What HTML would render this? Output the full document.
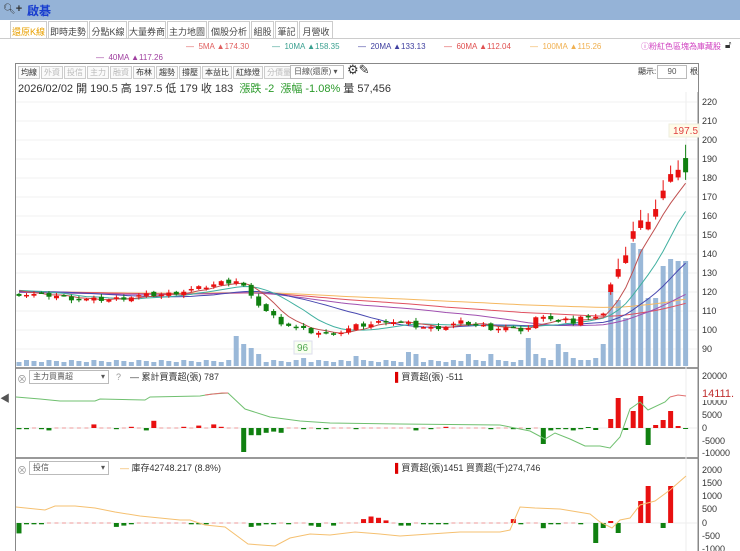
<!DOCTYPE html>
<html><head><meta charset="utf-8">
<style>
*{margin:0;padding:0;box-sizing:border-box}
body{width:740px;height:551px;overflow:hidden;background:#fff;font-family:"Liberation Sans","Noto Sans CJK TC",sans-serif;font-size:11px;color:#333;position:relative}
.abs{position:absolute;white-space:nowrap}
#title{left:0;top:0;width:740px;height:20px;background:#95b3d7}
.tab{position:absolute;top:21px;height:18px;border:1px solid #ccc;border-bottom:none;background:#fff;font-size:9px;color:#444;padding:3px 0 0;text-align:center;white-space:nowrap;overflow:hidden}
.tb{display:inline-block;border:1px solid #ccc;height:13px;font-size:8px;padding:0 2px;margin-right:1px;line-height:12px;color:#333;background:#fafafa}
.tb.g{color:#bbb}
.sel{position:absolute;border:1px solid #bbb;background:#fff;font-size:8px;height:14px;line-height:12px;padding:0 3px;color:#555;overflow:hidden}
</style></head><body>
<div id="title" class="abs"></div>
<div class="abs" style="left:3px;top:3px;font-size:10px;color:#333">🔍︎<b style="font-size:11px">+</b></div>
<div class="abs" style="left:27px;top:2px;font-size:12px;font-weight:bold;color:#1a3fcf">啟碁</div>
<div class="tab" style="left:10px;width:37px;color:#e8a000">還原K線</div>
<div class="tab" style="left:48px;width:40px">即時走勢</div>
<div class="tab" style="left:89px;width:38px">分點K線</div>
<div class="tab" style="left:128px;width:38px">大量券商</div>
<div class="tab" style="left:167px;width:40px">主力地圖</div>
<div class="tab" style="left:208px;width:42px">個股分析</div>
<div class="tab" style="left:251px;width:23px">組股</div>
<div class="tab" style="left:275px;width:23px">筆記</div>
<div class="tab" style="left:299px;width:34px">月營收</div>
<div class="abs" style="left:0;top:38px;width:740px;border-top:1px solid #ccc"></div>
<div class="abs" style="left:186px;top:42px;font-size:8px;color:#e06060">— &nbsp;5MA ▲174.30</div>
<div class="abs" style="left:272px;top:42px;font-size:8px;color:#3aa090">— &nbsp;10MA ▲158.35</div>
<div class="abs" style="left:358px;top:42px;font-size:8px;color:#4040a0">— &nbsp;20MA ▲133.13</div>
<div class="abs" style="left:444px;top:42px;font-size:8px;color:#e05050">— &nbsp;60MA ▲112.04</div>
<div class="abs" style="left:530px;top:42px;font-size:8px;color:#f0b050">— &nbsp;100MA ▲115.26</div>
<div class="abs" style="left:641px;top:41px;font-size:8px;color:#d040c0">ⓘ粉紅色區塊為庫藏股</div>
<div class="abs" style="left:725px;top:40px;font-size:10px">🔓︎</div>
<div class="abs" style="left:96px;top:53px;font-size:8px;color:#a040a0">— &nbsp;40MA ▲117.26</div>
<div class="abs" style="left:15px;top:63px;width:684px;height:488px;border:1px solid #888;border-bottom:none"></div>
<div class="abs" style="left:18px;top:66px">
<span class="tb">均線</span><span class="tb g">外資</span><span class="tb g">投信</span><span class="tb g">主力</span><span class="tb g">融資</span><span class="tb">布林</span><span class="tb">趨勢</span><span class="tb">撐壓</span><span class="tb">本益比</span><span class="tb">紅綠燈</span><span class="tb g">分價量</span>
</div>
<div class="sel" style="left:290px;top:65px;width:54px">日線(還原) ▾</div>
<div class="abs" style="left:347px;top:62px;font-size:13px">⚙︎✎</div>
<div class="abs" style="left:638px;top:66px;font-size:8px">顯示:</div>
<div class="sel" style="left:657px;top:65px;width:30px;text-align:center">90</div>
<div class="abs" style="left:690px;top:66px;font-size:8px">根</div>
<div class="abs" style="left:18px;top:80px;font-size:11px;color:#333">2026/02/02 開 190.5 高 197.5 低 179 收 183 <span style="color:#2a9a2a">&nbsp;漲跌 -2 &nbsp;漲幅 -1.08%</span> 量 57,456</div>
<div class="abs" style="left:0;top:390px;font-size:10px;color:#555">◀</div>
<div class="abs" style="left:16px;top:367px;width:683px;border-top:2px solid #999"></div>
<div class="abs" style="left:16px;top:457px;width:683px;border-top:2px solid #999"></div>
<div class="abs" style="left:17px;top:371px;color:#999;font-size:10px">⊗</div>
<div class="sel" style="left:29px;top:370px;width:80px">主力買賣超 <span style="float:right">▾</span></div>
<div class="abs" style="left:116px;top:372px;font-size:9px;color:#999">?</div>
<div class="abs" style="left:130px;top:370px;font-size:9px;color:#333">— 累計買賣超(張) 787</div>
<div class="abs" style="left:395px;top:370px;font-size:9px;color:#333"><span style="color:#d00">▌</span>買賣超(張) -511</div>
<div class="abs" style="left:17px;top:462px;color:#999;font-size:10px">⊗</div>
<div class="sel" style="left:29px;top:461px;width:80px">投信 <span style="float:right">▾</span></div>
<div class="abs" style="left:120px;top:461px;font-size:9px;color:#333"><span style="color:#f0b050">—</span> 庫存42748.217 (8.8%)</div>
<div class="abs" style="left:395px;top:461px;font-size:9px;color:#333"><span style="color:#d00">▌</span>買賣超(張)1451 買賣超(千)274,746</div>
<svg id="s" class="abs" style="left:0;top:0" width="740" height="551"></svg>
<script>
var S=document.getElementById('s'),h='';
function L(x1,y1,x2,y2,c,w){h+='<line x1="'+x1+'" y1="'+y1+'" x2="'+x2+'" y2="'+y2+'" stroke="'+c+'" stroke-width="'+(w||1)+'"/>';}
function R(x,y,w,hh,c){if(hh<0){y+=hh;hh=-hh;}h+='<rect x="'+x+'" y="'+y+'" width="'+w+'" height="'+Math.max(hh,1)+'" fill="'+c+'"/>';}
function T(x,y,t,c,s){h+='<text x="'+x+'" y="'+y+'" font-size="'+(s||9)+'" fill="'+(c||'#333')+'" font-family="Liberation Sans">'+t+'</text>';}
function P(pts,c){h+='<polyline fill="none" stroke="'+c+'" stroke-width="1" points="'+pts.join(' ')+'"/>';}
L(698,92,698,551,'#888');
var py=function(p){return 102+(220-p)*1.9;};
for(var p=90;p<=220;p+=10){L(16,py(p),697,py(p),'#f2f2f2');T(702,py(p)+3,p);}
L(686,92,686,551,'#eee');
var K={0:119,5:118,8:116,12:116,16:118,20:119,24:122,27:125,29:126,30:123,31:117,33:110,35:104,37:101,39:99,41:98,43:99,45:102,47:103,49:105,51:104,53:102,55:101,57:102,59:104,61:103,63:101,65:101,67:100,68:101,69:106,70:108,71:106,72:104,73:105,74:104,75:107,76:106,77:108,78:109,79:125,80:131,81:140,82:152,83:157,84:158,85:164,86:173,87:181,88:185,89:183};
var ks=Object.keys(K).map(Number),C=[];
for(var i=0;i<90;i++){for(var j=0;j<ks.length-1;j++)if(i>=ks[j]&&i<=ks[j+1]){var a=ks[j],b=ks[j+1];C[i]=K[a]+(K[b]-K[a])*(i-a)/(b-a)+((i*37)%7-3)*0.35;break;}}
C[79]=124;C[89]=183;
var X=function(i){return 19+i*7.49;};
var full=[];for(i=0;i<100;i++)full.push(120+Math.sin(i/7)*1.5);full=full.concat(C);
function ma(n){var out=[];for(var i=0;i<90;i++){var s=0;for(var k=0;k<n;k++)s+=full[100+i-k];out.push(X(i).toFixed(1)+','+py(s/n).toFixed(1));}return out;}
var V=[];for(i=0;i<90;i++)V[i]=4+((i*53)%3);
var vs={29:30,30:22,31:18,32:12,38:8,45:10,52:14,53:12,60:12,63:12,68:28,69:12,70:8,71:6,72:22,73:14,74:8,75:6,76:6,77:8,78:22,79:75,80:66,81:48,82:123,83:117,84:68,85:68,86:100,87:107,88:105,89:105};
for(var k in vs)V[k]=vs[k];
for(i=0;i<90;i++)R(X(i)-2.5,366-V[i],5,V[i],'#9ab8d8');
P(ma(100),'#f5b860');P(ma(60),'#e05060');P(ma(40),'#a050b0');P(ma(20),'#4848b0');P(ma(10),'#40b0a0');P(ma(5),'#c05050');
for(i=0;i<90;i++){var o=i?C[i-1]+((i*13)%5-2)*0.4:119,c=C[i];if(i==89)o=190.5;if(i>=79&&i<89)o=c-4;var up=c>=o,col=up?'#e81010':'#108010';var hi=Math.max(o,c)+0.5+(i*7%3)*0.5,lo=Math.min(o,c)-0.5-(i*11%3)*0.5;if(i==89){hi=197.5;lo=179;}if(i>=80&&i<89){hi+=4;}L(X(i),py(hi),X(i),py(lo),col);R(X(i)-2.5,py(Math.max(o,c)),5,Math.max(py(Math.min(o,c))-py(Math.max(o,c)),1.5),col);}
h+='<rect x="669" y="124" width="30" height="13" fill="#fffbe8" stroke="#eed"/>';T(673,134,'197.5','#e04040',10);
h+='<rect x="294" y="341" width="18" height="13" fill="#f8fff0" stroke="#dde"/>';T(297,351,'96','#5a5',10);
// sub 1
var y0=428;L(16,y0,697,y0,'#eee');
[[20000,376],[10000,402],[5000,415],[0,428],[-5000,441],[-10000,453]].forEach(function(a){T(702,a[1]+3,a[0]);});
h+='<rect x="699" y="386" width="41" height="14" fill="#fff"/>';T(702,397,'14111.','#c03030',11);
var B1={0:-1,1:-1,3:-1,4:-2,10:3,13:-1,15:1,17:-2,18:6,22:1,24:2,26:3,27:1,30:-20,31:-6,32:-6,33:-4,34:-3,35:-4,38:-1,40:-1,41:-1,45:-1,53:-2,55:-1,57:1,63:-1,66:-1,68:-1,71:-2,72:-1,73:-1,74:-2,75:-1};
for(i=0;i<90;i++){var v=B1[i]||0;if(i>=76)continue;if(i==70)continue;var hh=v*1.2;if(v!==0)R(X(i)-2.5,y0,5,-hh,hh>0?'#e81010':'#108010');else L(X(i)-2,y0,X(i)+2,y0,'#e99');}
R(X(70)-2.5,y0,5,16,'#108010');R(X(76)-2.5,y0-1,5,1,'#108010');R(X(77)-2.5,y0,5,2,'#108010');
R(X(79)-2.5,y0-9,5,9,'#e81010');R(X(80)-2.5,y0-30,5,30,'#e81010');R(X(81)-2.5,y0,5,2,'#108010');R(X(82)-2.5,y0-17,5,17,'#e81010');R(X(83)-2.5,y0-32,5,32,'#e81010');R(X(84)-2.5,y0,5,17,'#108010');R(X(85)-2.5,y0-3,5,3,'#e81010');R(X(86)-2.5,y0-8,5,8,'#e81010');R(X(87)-2.5,y0-17,5,17,'#e81010');R(X(88)-2.5,y0-2,5,2,'#e81010');R(X(89)-2.5,y0,5,1,'#108010');
var cl=[[16,397],[40,399],[60,401],[95,401],[100,399],[145,400],[150,397],[200,396],[212,394],[228,393],[245,409],[270,417],[300,421],[330,423],[400,424],[500,425],[530,431],[545,439],[555,433],[570,439],[585,446],[600,446],[610,448],[620,437],[630,409],[640,402],[648,410],[665,402],[670,397]];
var g=[];cl.forEach(function(p){g.push(p.join(','));});P(g,'#70c070');
P(['205,395','222,393','228,393'],'#e07070');P(['670,397','678,395','686,396'],'#e07070');
// sub 2
var y2=523;L(16,y2,697,y2,'#eee');
[[2000,470],[1500,483],[1000,496],[500,509],[0,523],[-500,536],[-1000,549]].forEach(function(a){T(702,a[1]+3,a[0]);});
var B2={0:-8,1:-1,2:-1,3:-1,13:-3,14:-2,15:-1,23:-1,24:-1,25:-1,31:-3,32:-2,33:-1,34:-1,36:-1,39:-2,40:-3,42:-2,46:3,47:5,48:4,49:2,51:-2,52:-2,54:-1,55:-1,56:-1,57:-1,66:3,67:-1,70:-4,71:-1,72:-1,75:-1};
for(i=0;i<76;i++){var v=B2[i]||0;if(v)R(X(i)-2.5,y2,5,-v*1.3,v>0?'#e81010':'#108010');else L(X(i)-2,y2,X(i)+2,y2,'#e99');}
R(X(77)-2.5,y2,5,20,'#108010');R(X(78)-2.5,y2,5,5,'#108010');R(X(79)-2.5,y2-2,5,2,'#e81010');R(X(80)-2.5,y2,5,10,'#108010');R(X(83)-2.5,y2-22,5,22,'#e81010');R(X(84)-2.5,y2-37,5,37,'#e81010');R(X(86)-2.5,y2,5,5,'#108010');R(X(87)-2.5,y2-37,5,37,'#e81010');
var c2=[[16,507],[45,510],[55,506],[75,506],[95,508],[115,512],[140,516],[160,518],[180,520],[190,520],[205,525],[225,527],[248,544],[275,546],[290,538],[310,534],[330,535],[355,532],[380,534],[400,536],[430,534],[460,532],[500,532],[510,530],[520,507],[535,508],[560,509],[590,514],[600,522],[612,528],[620,520],[630,518],[640,505],[655,501],[670,490],[686,476]];
g=[];c2.forEach(function(p){g.push(p.join(','));});P(g,'#f5c070');
S.innerHTML=h;
</script>
</body></html>
